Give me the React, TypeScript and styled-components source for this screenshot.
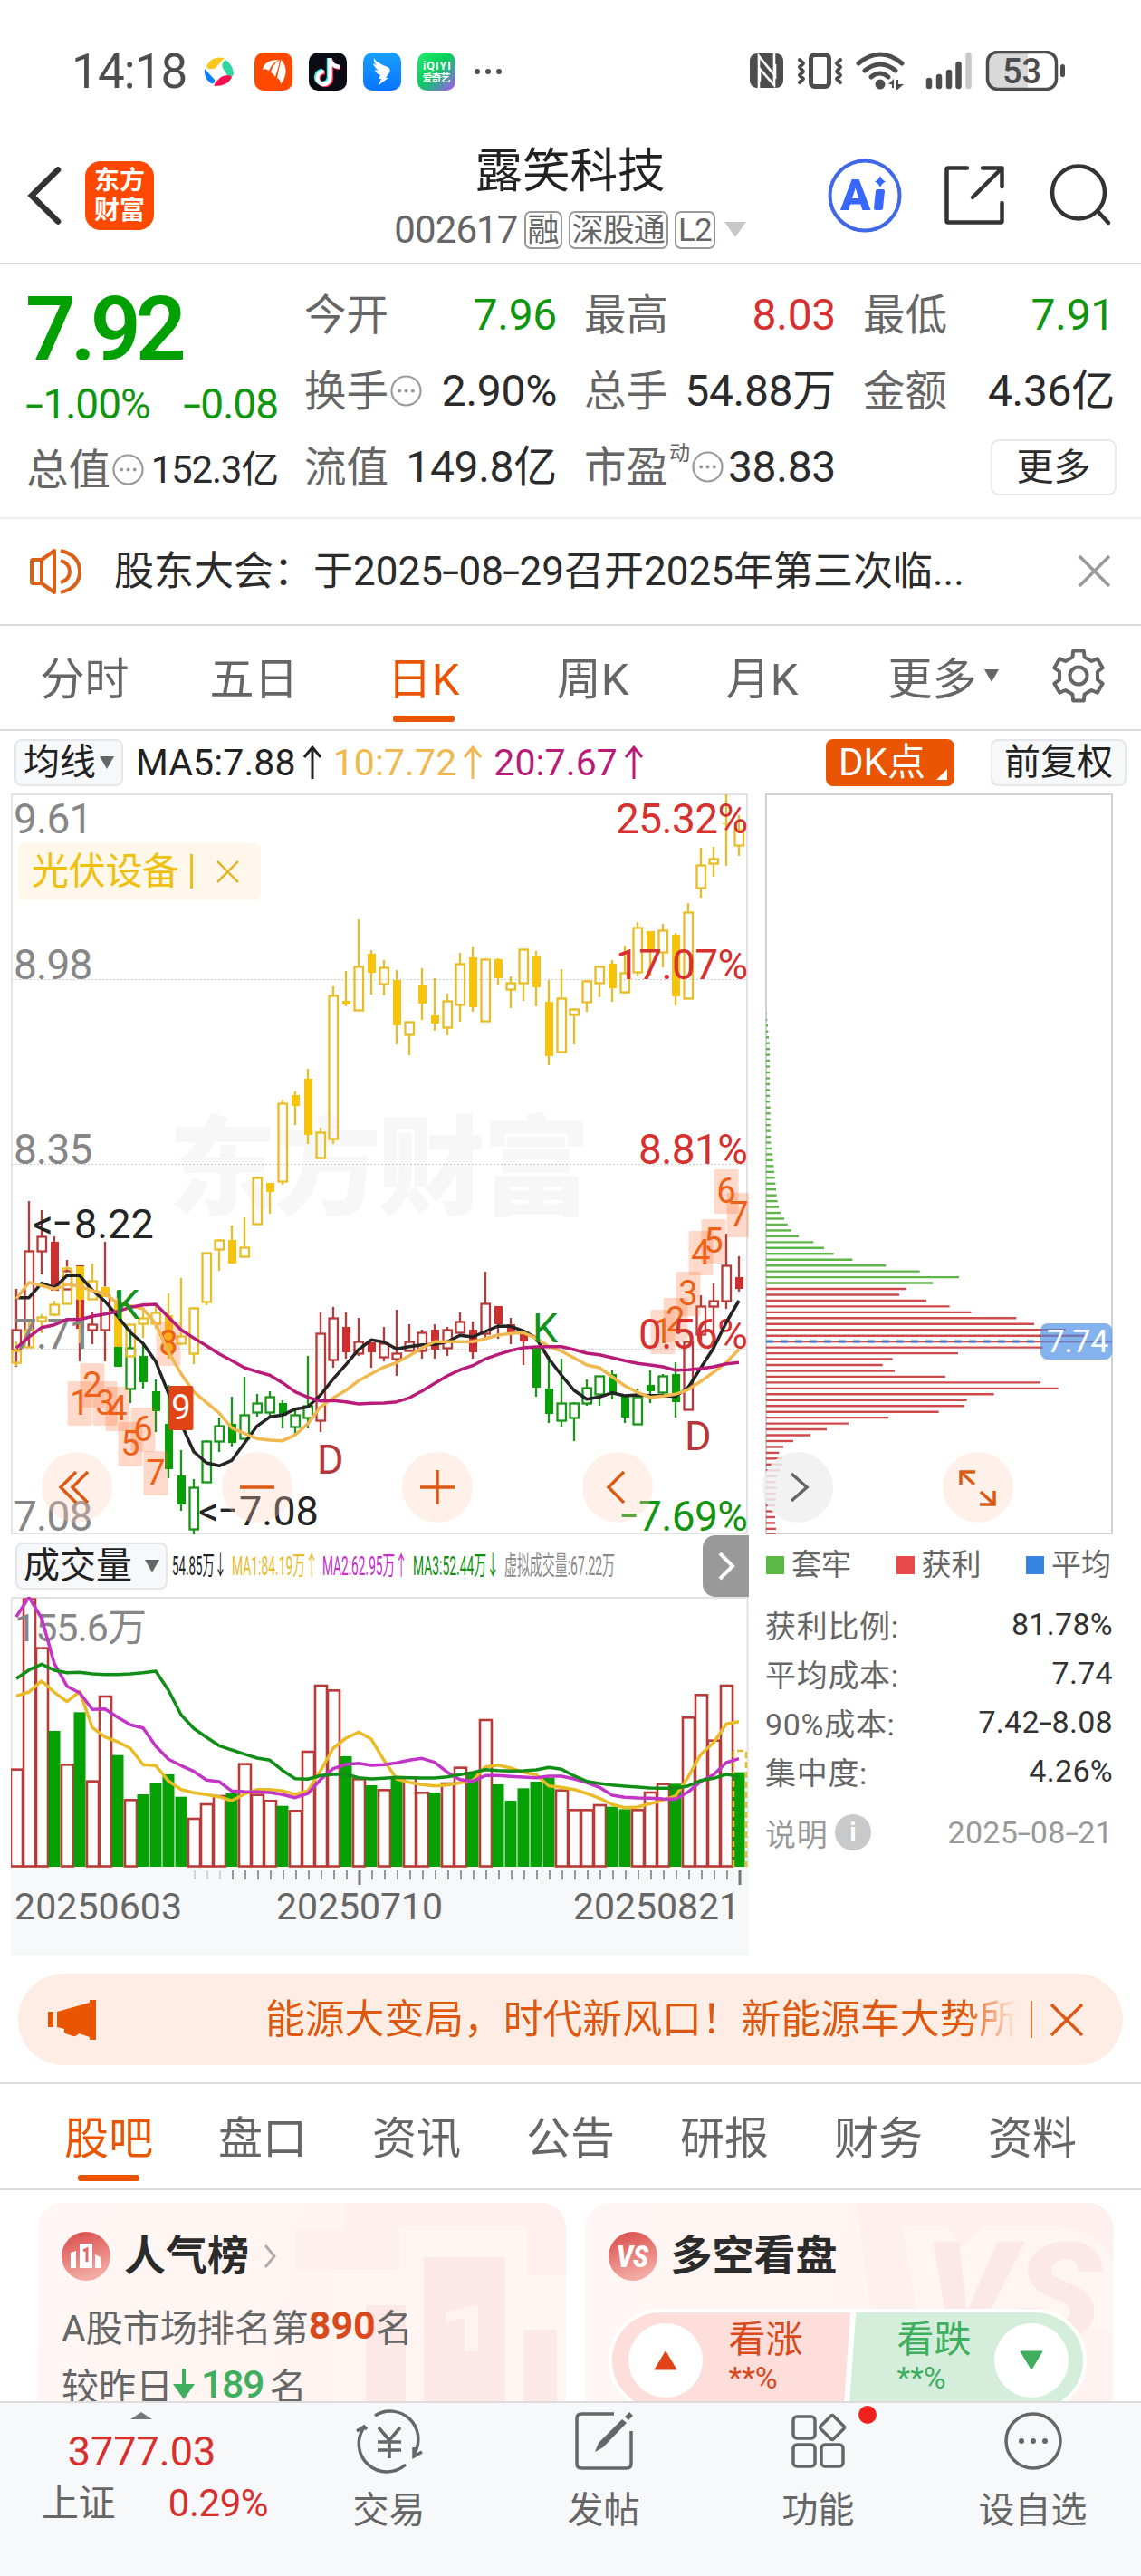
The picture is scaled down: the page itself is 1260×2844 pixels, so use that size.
import * as React from 'react'
import styled, { createGlobalStyle, css } from 'styled-components'

const FONT = `Roboto, 'Noto Sans CJK SC', sans-serif`

const color = {
  text: '#2b2b2b',
  sub: '#666',
  mute: '#999',
  line: '#dcdcdc',
  up: '#d6302f',
  down: '#0f960f',
  brand: '#ea5504',
  panel: '#f7f8fa',
}

const GlobalStyle = createGlobalStyle`
  * { box-sizing: border-box; }
  body {
    margin: 0;
    background: #fff;
    font-family: ${FONT};
    color: ${color.text};
    -webkit-font-smoothing: antialiased;
  }
  svg { display: block; flex: none; }
`

const Page = styled.div`
  display: flex;
  flex-direction: column;
  width: 1260px;
  height: 2844px;
  overflow: hidden;
  background: #fff;
  white-space: nowrap;
`

// Roboto's hyphen is short beside its digits
const Dash = styled.span`
  display: inline-block;
  width: 0.4em;
  text-align: center;
  letter-spacing: 0;
  transform: scaleX(1.55);
`

const dashed = (text: string) => text.split('-').map((part, i) => (
  <React.Fragment key={i}>{i > 0 && <Dash>-</Dash>}{part}</React.Fragment>
))

/* ---------- status bar ---------- */

const StatusBar = styled.div`
  display: flex;
  align-items: center;
  height: 142px;
  padding: 16px 84px 0 79px;
`

const Clock = styled.div`
  width: 145px;
  font-size: 53px;
  line-height: 60px;
  letter-spacing: -0.900px;
  color: #4d4d4d;
`

const AppIcons = styled.div`
  display: flex;
  align-items: center;
  gap: 18px;
  flex: 1;
`

const SystemIcons = styled.div`
  display: flex;
  align-items: center;
`

const StatusApps = () => (
  <AppIcons>
    <svg width="36" height="42" viewBox="0 0 36 42">
      <path d="M4 16C7 7 14 4 24 6L14 17Q8 20 4 16Z" fill="#fac81e" />
      <path d="M25 8Q33 13 34 23Q32 30 27 25L22 17Q20 12 25 8Z" fill="#30d5a0" />
      <path d="M32 27Q28 37 13 37Q11 35 20 27Q28 23 32 27Z" fill="#f8104e" />
      <path d="M2 18L13 30Q14 35 9 34Q1 29 2 18Z" fill="#0a80ff" />
    </svg>
    <svg width="42" height="42" viewBox="0 0 42 42" style={{ marginLeft: 3 }}>
      <rect width="42" height="42" rx="10" fill="#ff4800" />
      <path d="M9 19Q11 8 27 8Q19 12 16 20Q12 17 9 19ZM18 22Q20 13 28 8Q27 15 23 27Q21 23 18 22ZM25 28Q27 17 29.500 8Q40 20 29 35Q29 30 25 28Z" fill="#fff" />
    </svg>
    <svg width="42" height="42" viewBox="0 0 42 42">
      <rect width="42" height="42" rx="10" fill="#0b0b14" />
      <g fill="none" strokeWidth="4.4">
        <path d="M22 6V27A7 7 0 1 1 15 20M22 8Q24 15 32 16" stroke="#25f4ee" />
        <path d="M25 8V29A7 7 0 1 1 18 22M25 10Q27 17 35 17" stroke="#fe2c55" />
        <path d="M23.5 6V28A7 7 0 1 1 16.500 21M23.500 8Q25 15 34 16" stroke="#fff" />
      </g>
    </svg>
    <svg width="42" height="42" viewBox="0 0 42 42">
      <defs>
        <linearGradient id="ding" x1="0" y1="0" x2="0" y2="1">
          <stop offset="0" stopColor="#18a0ff" />
          <stop offset="1" stopColor="#0874ff" />
        </linearGradient>
      </defs>
      <rect width="42" height="42" rx="10" fill="url(#ding)" />
      <path d="M12 6Q14 11 27 16Q31 18 29 22L25 28H28L17 36L20 29H17L19 25Q14 23 13 19L17 20Q12 16 11 12L15 14Q11 10 12 6Z" fill="#fff" />
    </svg>
    <svg width="42" height="42" viewBox="0 0 42 42">
      <defs>
        <linearGradient id="qiyi" x1="0" y1="0" x2="1" y2="1">
          <stop offset="0.1" stopColor="#20e46a" />
          <stop offset="0.45" stopColor="#08cf5c" />
          <stop offset="0.68" stopColor="#3fa09a" />
          <stop offset="1" stopColor="#b74cff" />
        </linearGradient>
      </defs>
      <rect width="42" height="42" rx="10" fill="url(#qiyi)" />
      <g fill="#fff" fontFamily={FONT} fontWeight="700">
        <text x="6" y="19" fontSize="12.500" textLength="31">iQIYI</text>
        <text x="5.500" y="32" fontSize="11" textLength="31">爱奇艺</text>
      </g>
    </svg>
    <svg width="36" height="42" viewBox="0 0 36 42" fill="#4d4d4d">
      <circle cx="6" cy="21" r="3" />
      <circle cx="18" cy="21" r="3" />
      <circle cx="30" cy="21" r="3" />
    </svg>
  </AppIcons>
)

const StatusSystem = () => (
  <SystemIcons>
    <svg width="348" height="46" viewBox="828 56 348 46">
      <rect x="828" y="59" width="37" height="38" rx="8" fill="#4d4d4d" />
      <path d="M838 97V62L856 84V71M855 59V94L839 76V90" fill="none" stroke="#fff" strokeWidth="2.600" />
      <g fill="none" stroke="#4d4d4d" strokeLinecap="round" strokeLinejoin="round">
        <rect x="895.500" y="60.500" width="20" height="35" rx="4" strokeWidth="5" />
        <path d="M883 66L887 70L883 74L887 79L883 83L887 87L883 91M928 66L924 70L928 74L924 79L928 83L924 87L928 91" strokeWidth="4" />
        <path d="M948 70Q972 50 996 70M955 78Q972 64 989 78M962 85Q972 77 981 85" strokeWidth="5" />
      </g>
      <circle cx="972" cy="93" r="5.500" fill="#4d4d4d" />
      <path d="M981 93L987 87V97H985V93ZM990 88H992V93H998L991 99H990Z" fill="#4d4d4d" />
      <g stroke="#4d4d4d" strokeWidth="6.500" strokeLinecap="round">
        <path d="M1026 89V95M1037 85V95M1048 80V95M1058.500 71V95" />
        <path d="M1069.500 61V95" stroke="#c8c8c8" />
      </g>
      <path d="M1100 58H1135V98H1100Q1091 98 1091 89V67Q1091 58 1100 58Z" fill="#d9d9d9" />
      <rect x="1090.500" y="57.500" width="76" height="41" rx="11" fill="none" stroke="#4d4d4d" strokeWidth="3.500" />
      <rect x="1171" y="71" width="5" height="14" rx="2.500" fill="#4d4d4d" />
      <text x="1128.500" y="91.500" fontSize="38" fontWeight="500" fontFamily={FONT} textAnchor="middle" fill="#4d4d4d">53</text>
    </svg>
  </SystemIcons>
)

/* ---------- title bar ---------- */

const TitleBar = styled.header`
  display: flex;
  justify-content: space-between;
  height: 150px;
  padding: 0 29px 0 28px;
  border-bottom: 2px solid ${color.line};
`

const TitleSide = styled.div<{ $gap: number }>`
  display: flex;
  align-items: center;
  gap: ${p => p.$gap}px;
  width: 320px;
`

const Logo = styled.div`
  display: flex;
  flex-direction: column;
  align-items: center;
  justify-content: center;
  width: 76px;
  height: 76px;
  border-radius: 17px;
  background: #ff4800;
  color: #fff;
  font-size: 28px;
  font-weight: 700;
  line-height: 33px;
`

const TitleCenter = styled.div`
  display: flex;
  flex-direction: column;
  align-items: center;
`

const StockName = styled.h1`
  margin: 12px 0 0;
  font-size: 52.500px;
  font-weight: 400;
  line-height: 70px;
  color: #222;
`

const StockCode = styled.div`
  display: flex;
  align-items: center;
  height: 52px;
  margin-top: 4px;
  gap: 7px;
  font-size: 42px;
  color: ${color.sub};
  letter-spacing: -0.900px;
`

const Badge = styled.span`
  height: 42px;
  padding: 0 2px;
  border: 2px solid #999;
  border-radius: 7px;
  font-size: 35px;
  line-height: 39px;
`

const Caret = styled.i<{ $w: number; $h: number; $color?: string; $ml?: number }>`
  display: inline-block;
  margin-left: ${p => p.$ml || 0}px;
  border: solid transparent;
  border-width: ${p => p.$h}px ${p => p.$w / 2}px 0;
  border-top-color: ${p => p.$color || color.sub};
`

/* ---------- quote ---------- */

const Quote = styled.section`
  display: flex;
  height: 281px;
  padding: 14px 28px 0 29px;
  border-bottom: 2px solid #ececec;
`

const PriceColumn = styled.div`
  width: 278px;
  margin-right: 29px;
`

const Price = styled.div`
  height: 110px;
  margin-left: -1px;
  font-size: 98px;
  font-weight: 600;
  line-height: 116px;
  letter-spacing: -6px;
  color: #00a000;
`

const Change = styled.div`
  display: flex;
  justify-content: space-between;
  margin-bottom: 18px;
  font-size: 46px;
  line-height: 60px;
  letter-spacing: -1px;
  color: ${color.down};
`

const QuoteGrid = styled.div`
  display: grid;
  flex: none;
  grid-template-columns: 279px 278px 278px;
  grid-auto-rows: 84px;
  column-gap: 30px;
`

const Cell = styled.div<{ $tone?: string; $small?: boolean }>`
  display: flex;
  align-items: center;
  justify-content: space-between;
  line-height: 60px;
  font-size: 46.500px;

  ${p => p.$small && css`height: 50px;`}

  em {
    display: flex;
    align-items: center;
    gap: 2px;
    font-style: normal;
    color: ${color.sub};
  }
  b {
    font-weight: 400;
    font-size: ${p => (p.$small ? 42 : 48)}px;
    letter-spacing: ${p => (p.$small ? -1.200 : -0.300)}px;
    color: ${p => p.$tone || color.text};
  }
  sup {
    align-self: flex-start;
    margin: 3px 0 0 -1px;
    font-size: 23px;
    line-height: 24px;
  }
`

const MoreButton = styled.button`
  justify-self: end;
  align-self: center;
  width: 139px;
  height: 62px;
  margin-right: -2px;
  padding: 0;
  border: 2px solid #e8e8e8;
  border-radius: 9px;
  background: #fff;
  font-family: inherit;
  font-size: 41px;
  line-height: 54px;
  color: ${color.text};
`

const Dots = ({ size = 35, stroke = '#999', width = 2.2 }: { size?: number; stroke?: string; width?: number }) => (
  <svg width={size} height={size} viewBox="0 0 36 36" fill={stroke}>
    <circle cx="18" cy="18" r="16.500" fill="none" stroke={stroke} strokeWidth={width} />
    <circle cx="10.500" cy="18" r="2" />
    <circle cx="18" cy="18" r="2" />
    <circle cx="25.500" cy="18" r="2" />
  </svg>
)

/* ---------- notice ---------- */

const Notice = styled.section`
  display: flex;
  align-items: center;
  height: 118px;
  padding: 0 33px;
  border-bottom: 2px solid ${color.line};
`

const NoticeText = styled.p`
  flex: 1;
  margin: 0 0 0 34px;
  font-size: 44px;
  line-height: 60px;
`

const Cross = ({ size, stroke, width }: { size: number; stroke: string; width: number }) => (
  <svg width={size} height={size} viewBox={`0 0 ${size} ${size}`}>
    <path d={`M2 2L${size - 2} ${size - 2}M${size - 2} 2L2 ${size - 2}`} stroke={stroke} strokeWidth={width} />
  </svg>
)

/* ---------- tabs ---------- */

const Tabs = styled.nav<{ $pad: number }>`
  display: flex;
  align-items: center;
  height: 117px;
  padding: 0 ${p => p.$pad}px;
  border-bottom: 2px solid ${color.line};
`

const Tab = styled.div<{ $w: number; $active?: boolean }>`
  display: flex;
  position: relative;
  align-items: center;
  justify-content: center;
  width: ${p => p.$w}px;
  height: 100%;
  padding-bottom: 4px;
  font-size: 49px;
  color: ${color.sub};

  ${p => p.$active && css`
    color: ${color.brand};
    &::after {
      position: absolute;
      left: calc(50% - 34px);
      bottom: 8px;
      width: 68px;
      height: 7px;
      border-radius: 3px;
      background: ${color.brand};
      content: '';
    }
  `}
`

/* ---------- indicator row ---------- */

const IndicatorRow = styled.div`
  display: flex;
  align-items: center;
  height: 69px;
  padding: 0 16px;
`

const Chip = styled.div<{ $w: number; $brand?: boolean }>`
  display: flex;
  position: relative;
  align-items: center;
  justify-content: ${p => (p.$brand ? 'flex-start' : 'center')};
  width: ${p => p.$w}px;
  height: 52px;
  padding-left: ${p => (p.$brand ? 12 : 0)}px;
  border: 2px solid ${p => (p.$brand ? color.brand : '#e4e6ea')};
  border-radius: 8px;
  background: ${p => (p.$brand ? color.brand : color.panel)};
  color: ${p => (p.$brand ? '#fff' : '#222')};
  font-size: ${p => (p.$brand ? 42 : 40)}px;
  line-height: 48px;
`

const Corner = styled.i`
  position: absolute;
  right: 6px;
  bottom: 5px;
  border: 6px solid transparent;
  border-right-color: #fff;
  border-bottom-color: #fff;
`

const Averages = styled.div`
  display: flex;
  flex: 1;
  margin-left: 14px;
  gap: 12px;
  font-size: 41px;
  line-height: 52px;
`

const Average = styled.span<{ $color: string }>`
  display: flex;
  align-items: center;
  gap: 7px;
  letter-spacing: 0.100px;
  color: ${p => p.$color};
`

const UpArrow = ({ stroke }: { stroke: string }) => (
  <svg width="22" height="40" viewBox="0 0 22 40">
    <path d="M11 38V4M2 14L11 3L20 14" fill="none" stroke={stroke} strokeWidth="3" />
  </svg>
)

/* ---------- chart data ---------- */

// [high, body top, body bottom, low, filled]
type Candle = [number, number, number, number, 0 | 1]

const sector: Candle[] = [
  [1481, 1491, 1504, 1508, 0], [1457, 1468, 1487, 1487, 0], [1451, 1454, 1458, 1472, 0], [1436, 1440, 1451, 1453, 0],
  [1398, 1400, 1439, 1440, 0], [1398, 1398, 1435, 1483, 1], [1395, 1414, 1434, 1434, 0], [1420, 1421, 1432, 1432, 1],
  [1433, 1437, 1487, 1487, 1], [1462, 1462, 1497, 1497, 0], [1447, 1455, 1461, 1477, 0], [1442, 1449, 1461, 1467, 0],
  [1428, 1452, 1496, 1500, 1], [1411, 1475, 1483, 1483, 0], [1443, 1444, 1494, 1506, 0], [1383, 1383, 1437, 1441, 0],
  [1368, 1369, 1379, 1403, 0], [1353, 1369, 1395, 1395, 1], [1344, 1377, 1387, 1387, 0], [1299, 1300, 1351, 1351, 0],
  [1306, 1306, 1316, 1340, 1], [1214, 1218, 1304, 1308, 0], [1205, 1209, 1221, 1242, 1], [1180, 1191, 1253, 1263, 1],
  [1245, 1250, 1278, 1279, 0], [1089, 1099, 1257, 1263, 0], [1072, 1105, 1109, 1111, 1], [1015, 1067, 1115, 1115, 0],
  [1049, 1053, 1074, 1098, 1], [1060, 1068, 1086, 1099, 0], [1071, 1082, 1132, 1153, 1], [1128, 1128, 1142, 1165, 0],
  [1069, 1088, 1108, 1126, 1], [1080, 1121, 1130, 1138, 1], [1097, 1105, 1134, 1143, 0], [1052, 1064, 1109, 1128, 0],
  [1045, 1057, 1112, 1117, 1], [1058, 1059, 1127, 1127, 0], [1058, 1059, 1080, 1088, 1], [1078, 1085, 1092, 1113, 0],
  [1048, 1048, 1085, 1105, 0], [1050, 1056, 1090, 1111, 1], [1082, 1106, 1166, 1176, 1], [1070, 1102, 1161, 1161, 0],
  [1113, 1114, 1120, 1153, 0], [1082, 1083, 1106, 1117, 0], [1066, 1067, 1085, 1101, 0], [1060, 1064, 1091, 1106, 1],
  [1044, 1074, 1095, 1097, 0], [1018, 1024, 1073, 1078, 0], [1028, 1028, 1050, 1077, 1], [1020, 1027, 1051, 1068, 0],
  [1030, 1032, 1100, 1110, 1], [997, 1007, 1102, 1102, 0], [936, 955, 980, 991, 0], [935, 948, 953, 968, 0],
  [877, 909, 910, 956, 1], [900, 916, 933, 945, 0],
]

const stock: Candle[] = [
  [1423, 1468, 1490, 1509, 0], [1326, 1381, 1468, 1487, 0], [1336, 1365, 1381, 1407, 0], [1365, 1371, 1425, 1425, 1],
  [1391, 1403, 1423, 1424, 0], [1397, 1397, 1467, 1503, 1], [1448, 1462, 1468, 1484, 0], [1371, 1430, 1468, 1503, 0],
  [1425, 1442, 1509, 1509, 1], [1467, 1488, 1533, 1549, 0], [1483, 1497, 1526, 1533, 1], [1523, 1536, 1558, 1581, 1],
  [1529, 1572, 1622, 1632, 1], [1601, 1629, 1661, 1668, 1], [1633, 1642, 1688, 1694, 0], [1590, 1591, 1636, 1636, 0],
  [1565, 1574, 1591, 1603, 0], [1542, 1572, 1593, 1597, 1], [1520, 1562, 1588, 1588, 0], [1539, 1549, 1559, 1564, 0],
  [1536, 1542, 1559, 1563, 0], [1546, 1549, 1563, 1577, 1], [1557, 1562, 1575, 1583, 0], [1497, 1552, 1565, 1577, 0],
  [1449, 1472, 1568, 1581, 0], [1443, 1455, 1501, 1510, 0], [1449, 1465, 1493, 1500, 1], [1455, 1481, 1494, 1497, 0],
  [1482, 1482, 1493, 1510, 1], [1465, 1483, 1498, 1503, 0], [1446, 1494, 1500, 1519, 0], [1462, 1481, 1491, 1491, 0],
  [1468, 1471, 1491, 1500, 0], [1462, 1468, 1490, 1500, 1], [1465, 1468, 1488, 1497, 0], [1449, 1459, 1471, 1472, 0],
  [1459, 1468, 1493, 1500, 1], [1404, 1439, 1472, 1477, 0], [1442, 1442, 1462, 1478, 1], [1455, 1462, 1472, 1484, 1],
  [1468, 1473, 1481, 1507, 1], [1488, 1488, 1532, 1542, 1], [1497, 1533, 1561, 1571, 1], [1500, 1549, 1568, 1575, 0],
  [1548, 1549, 1565, 1591, 0], [1523, 1532, 1549, 1552, 0], [1519, 1519, 1539, 1552, 0], [1513, 1517, 1537, 1545, 1],
  [1542, 1542, 1565, 1571, 1], [1533, 1542, 1572, 1572, 0], [1513, 1529, 1536, 1549, 1], [1517, 1519, 1537, 1540, 0],
  [1504, 1517, 1548, 1565, 1], [1480, 1481, 1556, 1556, 0], [1430, 1442, 1473, 1480, 0], [1417, 1436, 1442, 1471, 0],
  [1362, 1397, 1436, 1445, 0], [1387, 1410, 1423, 1426, 1],
]

// the stock trades below the K/D signal in these two spans
const isDown = (i: number) => (i >= 8 && i <= 23) || (i >= 41 && i <= 52)

const ma5 = [488, 488, 440, 455, 415, 415, 463, 500, 550, 603, 640, 700, 805, 905, 998, 1035, 1045, 1027, 970, 913, 883, 877, 857, 850, 810, 757, 710, 660, 628, 635, 658, 650, 644, 643, 634, 613, 618, 600, 582, 583, 598, 622, 690, 745, 795, 824, 817, 803, 813, 810, 812, 812, 815, 785, 720, 655, 570, 498]
const ma10 = [492, 438, 448, 460, 443, 450, 465, 475, 507, 515, 525, 575, 668, 740, 800, 835, 870, 920, 938, 955, 960, 962, 943, 905, 850, 820, 795, 763, 740, 718, 703, 680, 655, 634, 634, 634, 634, 624, 612, 607, 604, 622, 650, 665, 688, 711, 720, 750, 780, 802, 818, 814, 808, 792, 765, 735, 703, 660]
const ma20 = [655, 618, 587, 578, 560, 560, 550, 542, 533, 520, 512, 510, 552, 595, 622, 647, 674, 697, 720, 733, 745, 770, 800, 818, 830, 829, 833, 840, 838, 837, 833, 820, 797, 772, 747, 727, 713, 691, 676, 663, 654, 651, 650, 650, 660, 672, 677, 687, 697, 706, 711, 717, 728, 727, 723, 717, 707, 703]

const volume = [788, 224, 386, 663, 772, 601, 827, 546, 743, 889, 873, 834, 807, 881, 951, 903, 876, 870, 770, 872, 892, 911, 925, 729, 510, 526, 747, 820, 843, 856, 815, 814, 865, 867, 834, 782, 798, 624, 840, 894, 853, 831, 818, 857, 922, 922, 906, 914, 922, 922, 864, 836, 838, 616, 541, 692, 510, 800]
const volumeDown = [3, 5, 8, 10, 11, 12, 13, 17, 21, 26, 28, 30, 33, 36, 38, 39, 40, 41, 42, 47, 48, 52, 57]
const vma1 = [547, 534, 497, 535, 566, 533, 652, 683, 699, 721, 775, 778, 829, 857, 868, 874, 881, 894, 872, 857, 857, 862, 873, 862, 795, 720, 687, 667, 690, 760, 822, 833, 841, 845, 842, 835, 827, 782, 776, 786, 800, 808, 845, 850, 857, 870, 886, 907, 917, 915, 904, 893, 878, 815, 740, 702, 640, 632]
const vma2 = [285, 220, 290, 440, 515, 537, 592, 590, 618, 643, 653, 713, 757, 778, 797, 826, 831, 862, 864, 865, 867, 874, 884, 870, 824, 788, 774, 770, 777, 775, 769, 760, 754, 767, 800, 824, 830, 811, 811, 814, 816, 818, 813, 813, 822, 834, 850, 876, 883, 885, 886, 888, 889, 865, 830, 808, 768, 755]
const vma3 = [490, 461, 442, 462, 470, 469, 474, 476, 476, 474, 470, 465, 528, 610, 655, 684, 712, 726, 740, 753, 760, 794, 821, 823, 811, 807, 806, 818, 822, 820, 817, 818, 819, 819, 815, 808, 801, 791, 794, 796, 795, 792, 784, 790, 812, 830, 837, 842, 846, 849, 852, 853, 853, 845, 827, 820, 807, 813]

const trapped = [2, 4, 6, 7, 9, 11, 12, 12, 12, 12, 12, 12, 12, 12, 12, 12, 14, 14, 14, 14, 14, 15, 16, 19, 21, 23, 25, 27, 29, 31, 33, 35, 38, 42, 48, 60, 71, 83, 108, 157, 192, 224, 286, 397, 509, 639, 552]
const profit = [464, 441, 531, 608, 680, 829, 888, 992, 1062, 1146, 917, 636, 419, 386, 426, 594, 909, 968, 755, 665, 656, 572, 405, 273, 201, 147, 90, 57, 43, 54, 54, 45, 37, 32, 34, 33, 32, 30, 27, 30, 30, 33, 33]

// [digit, x, y]
const countDown: [number, number, number][] = [
  [1, 74.5, 1525], [2, 88.5, 1505], [3, 102.5, 1525], [4, 116.5, 1531], [5, 130.5, 1570], [6, 144.5, 1554],
  [7, 158.5, 1602], [8, 172.5, 1459],
  [1, 718.5, 1446], [2, 732.5, 1433], [3, 746.5, 1404], [4, 760.5, 1359], [5, 774.5, 1346], [6, 788.5, 1291],
  [7, 802.5, 1317],
]

const slotX = (i: number) => 18 + i * 14
const priceY = (v: number) => 1270 + v / 3
const volumeY = (v: number) => 1690 + v / 3
const toPoints = (data: number[], y: (v: number) => number) => data.map((v, i) => `${slotX(i)},${y(v).toFixed(1)}`).join(' ')

const CandleMark = ({ i, data, stroke, fill }: { i: number; data: Candle; stroke: string; fill: string }) => {
  const [high, top, bottom, low, filled] = data
  const x = slotX(i)
  return (
    <g stroke={stroke} strokeWidth="2.300">
      {high < top && <path d={`M${x} ${high}V${top}`} />}
      {low > bottom && <path d={`M${x} ${bottom}V${low}`} />}
      {filled
        ? <rect x={x - 4} y={top} width="9" height={Math.max(bottom - top, 1)} fill={fill} stroke="none" />
        : <rect x={x - 4.5} y={top + 0.5} width="9.500" height={bottom - top} fill="none" />}
    </g>
  )
}

/* ---------- chart ---------- */

const ChartArea = styled.section`
  display: flex;
  height: 1291px;
  padding-left: 12px;
`

const ChartColumn = styled.div`
  position: relative;
  width: 815px;
`

const SectorTag = styled.div`
  display: flex;
  position: absolute;
  left: 8px;
  top: 55px;
  align-items: center;
  width: 268px;
  height: 62px;
  padding-left: 15px;
  border-radius: 7px;
  background: #fff8ea;
  color: #f0c00f;
  font-size: 41px;
  line-height: 58px;
  letter-spacing: -0.300px;

  i {
    width: 3px;
    height: 38px;
    margin: 0 25px 0 12px;
    background: #edc01c;
  }
`

const Controls = styled.div<{ $left: number }>`
  display: flex;
  position: absolute;
  left: ${p => p.$left}px;
  top: 727px;
  gap: 121px;
`

const RoundButton = styled.button<{ $gray?: boolean }>`
  display: flex;
  align-items: center;
  justify-content: center;
  width: 78px;
  height: 78px;
  padding: 0;
  border: none;
  border-radius: 50%;
  background: ${p => (p.$gray ? 'rgba(240, 240, 240, 0.85)' : 'rgba(255, 208, 185, 0.3)')};
`

const glyphs = {
  rewind: 'M38 22L21 39L38 56M51 22L34 39L51 56',
  minus: 'M20 39H58',
  plus: 'M20 39H58M39 20V58',
  prev: 'M46 22L29 39L46 56',
  next: 'M32 24L49 39L32 54',
  expand: 'M20 36V22H36M21 23L35 36M42 44L57 58M41 58H57V43',
}

const Glyph = ({ name, stroke = '#dd5a14' }: { name: keyof typeof glyphs; stroke?: string }) => (
  <svg width="78" height="78" viewBox="0 0 78 78">
    <path d={glyphs[name]} fill="none" stroke={stroke} strokeWidth="3.500" />
  </svg>
)

const ChartDash = () => <tspan fontSize="68" fontWeight="300" dy="5">-</tspan>

const PriceChart = () => (
  <svg width="815" height="818" viewBox="12 876 815 818" fontFamily={FONT}>
    <text x="186" y="1332" fontSize="119" fontWeight="900" fill="#f7f7f7" textLength="466">东方财富</text>
    <path d="M13 1081.500H825M13 1285.500H825M13 1489.500H825" stroke="#ccc" strokeWidth="1" strokeDasharray="2 2" />
    <path d="M13 877V1693" stroke="#ddd" strokeWidth="1.500" />
    <path d="M12 877H825V1693H12" fill="none" stroke="#e2e2e2" strokeWidth="2" />
    {stock.map((c, i) => (
      <CandleMark key={i} i={i} data={c} stroke={isDown(i) ? '#1a941a' : '#b83a38'} fill={isDown(i) ? '#06a006' : '#cc2f30'} />
    ))}
    {sector.map((c, i) => <CandleMark key={i} i={i} data={c} stroke="#e8be28" fill="#f6c40c" />)}
    {countDown.map(([n, x, y], i) => (
      <g key={i}>
        <rect x={x} y={y} width="27" height="49" rx="2" fill="#ff6a2a" fillOpacity="0.25" />
        <text x={x + 13.500} y={y + 37} fontSize="38" fill="#ee6016" textAnchor="middle">{n}</text>
      </g>
    ))}
    <g fontSize="46" fill="#868686" letterSpacing="-0.800">
      <text x="15" y="920">9.61</text>
      <text x="15" y="1081">8.98</text>
      <text x="15" y="1285">8.35</text>
      <text x="15" y="1489">7.71</text>
      <text x="15" y="1690">7.08</text>
    </g>
    <g fontSize="46" fill="#d6302f" letterSpacing="-0.600">
      <text x="680" y="920">25.32%</text>
      <text x="680" y="1081">17.07%</text>
      <text x="705" y="1285">8.81%</text>
      <text x="705" y="1489">0.56%</text>
      <text x="685" y="1690" fill="#12940f"><ChartDash /><tspan x="705" dy="-5">7.69%</tspan></text>
    </g>
    <g fill="none" strokeWidth="3.500" strokeLinejoin="round">
      <polyline points={toPoints(ma5, priceY)} stroke="#242424" />
      <polyline points={toPoints(ma10, priceY)} stroke="#f0b84e" />
      <polyline points={toPoints(ma20, priceY)} stroke="#b91c78" />
    </g>
    <rect x="186.500" y="1530" width="27" height="49" rx="2" fill="#e04416" />
    <text x="200" y="1567" fontSize="38" fill="#fff" textAnchor="middle">9</text>
    <g fontSize="45">
      <text x="126" y="1456" fill="#13921c">K</text>
      <text x="588" y="1482" fill="#13921c">K</text>
      <text x="350" y="1627" fill="#b5373a">D</text>
      <text x="756" y="1601" fill="#b5373a">D</text>
      <text x="36" y="1367" fill="#242424">&lt;<ChartDash /><tspan x="82" dy="-5">8.22</tspan></text>
      <text x="219" y="1684" fill="#242424">&lt;<ChartDash /><tspan x="264" dy="-5">7.08</tspan></text>
    </g>
  </svg>
)

const VolumeHead = styled.div`
  display: flex;
  align-items: center;
  height: 69px;
  padding-left: 5px;
`

const NextPane = styled.button`
  display: flex;
  align-items: center;
  justify-content: center;
  width: 51px;
  height: 68px;
  margin-left: auto;
  padding: 0;
  border: none;
  border-radius: 14px 0 0 14px;
  background: #999;
`

const volumeTexts: [string, number, number, string][] = [
  ['54.85万↓', 0, 60, '#222'],
  ['MA1:84.19万↑', 66, 95, '#e8bb2c'],
  ['MA2:62.95万↑', 166, 94, '#c52fc8'],
  ['MA3:52.44万↓', 266, 95, '#0f8f14'],
  ['虚拟成交量:67.22万', 367, 122, '#888'],
]

const VolumeTexts = () => (
  <svg width="492" height="44" viewBox="0 0 492 44" fontFamily={FONT} fontSize="29">
    {volumeTexts.map(([t, x, w, fill]) => (
      <text key={t} x={x} y="32" fill={fill} textLength={w} lengthAdjust="spacingAndGlyphs">{t}</text>
    ))}
  </svg>
)

const VolumeChart = () => (
  <svg width="815" height="397" viewBox="12 1763 815 397" fontFamily={FONT}>
    <rect x="12" y="2064" width="815" height="95" fill={color.panel} />
    <path d="M12 1764H825.500V2062M12.500 1764V2062" fill="none" stroke="#e2e2e2" strokeWidth="2" />
    {volume.map((v, i) => {
      const x = slotX(i)
      const top = volumeY(v)
      return volumeDown.includes(i)
        ? <rect key={i} x={x - 6.5} y={top} width="13" height={2061 - top} fill="#04a004" />
        : <rect key={i} x={x - 6} y={top + 1} width="13" height={2059.5 - top} fill="#fff" stroke="#b93a38" strokeWidth="2.600" />
    })}
    <path d="M810 2061V1933H824V2061" fill="none" stroke="#e6bd2e" strokeWidth="2.500" strokeDasharray="7 4" />
    <text x="16" y="1812" fontSize="43" fill="#868686" letterSpacing="-1">155.6万</text>
    <g fill="none" strokeWidth="3.500" strokeLinejoin="round">
      <polyline points={toPoints(vma1, volumeY)} stroke="#e9bc27" />
      <polyline points={toPoints(vma2, volumeY)} stroke="#c335c6" />
      <polyline points={toPoints(vma3, volumeY)} stroke="#118e17" />
    </g>
    {volume.map((_, i) => i > 13 && (
      <path
        key={i}
        d={`M${slotX(i) + 1} 2065V${i % 30 === 27 ? 2081 : 2075}`}
        stroke={i < 17 ? '#c8c8c8' : '#777'}
        strokeWidth={i % 30 === 27 ? 3 : 1.500}
      />
    ))}
    <g fontSize="41" fill="#666">
      <text x="16" y="2119" textLength="185">20250603</text>
      <text x="305" y="2119" textLength="184">20250710</text>
      <text x="633" y="2119" textLength="184">20250821</text>
    </g>
  </svg>
)

/* ---------- cost distribution ---------- */

const CostColumn = styled.div`
  position: relative;
  width: 384px;
  margin-left: 18px;
`

const Legend = styled.div`
  display: flex;
  justify-content: space-between;
  padding: 12px 2px 0 1px;
  font-size: 33px;
  line-height: 44px;
  color: ${color.sub};
`

const LegendItem = styled.span<{ $color: string }>`
  display: flex;
  align-items: center;
  gap: 8px;

  &::before {
    width: 20px;
    height: 20px;
    background: ${p => p.$color};
    content: '';
  }
`

const CostRows = styled.dl`
  margin: 16px 0 0;
`

const CostRow = styled.div<{ $last?: boolean }>`
  display: flex;
  align-items: center;
  justify-content: space-between;
  height: 54px;
  margin-top: ${p => (p.$last ? 14 : 0)}px;
  font-size: 34px;
  color: ${p => (p.$last ? color.mute : '#333')};

  dt {
    display: flex;
    align-items: center;
    gap: 8px;
    letter-spacing: 0.700px;
    color: ${p => (p.$last ? color.mute : color.sub)};
  }
  dd {
    margin: 0;
    letter-spacing: 0.300px;
  }
`

const Info = styled.i`
  width: 40px;
  height: 40px;
  border-radius: 50%;
  background: #c9c9c9;
  color: #fff;
  font: 700 28px/40px ${FONT};
  text-align: center;
`

const CostChart = () => (
  <svg width="384" height="818" viewBox="845 876 384 818" fontFamily={FONT}>
    <rect x="846" y="877" width="382" height="816" fill="none" stroke="#ccc" strokeWidth="1.800" />
    {[...trapped, ...profit].map((v, i) => (
      <path key={i} d={`M846 ${1119.4 + i * 6.46}h${v / 3}`} stroke={i < trapped.length ? '#5eb548' : '#cf4a4b'} strokeWidth="2.400" />
    ))}
    <path d="M846 1481H1149" stroke="#3a80dc" strokeWidth="3" strokeDasharray="8 8" />
    <rect x="1149" y="1461" width="79" height="40" rx="8" fill="#4a8de4" fillOpacity="0.68" />
    <text x="1190" y="1493" fontSize="35" fill="#fff" textAnchor="middle">7.74</text>
  </svg>
)

/* ---------- banner ---------- */

const Banner = styled.section`
  display: flex;
  align-items: center;
  height: 101px;
  margin: 13px 20px 19px;
  padding: 0 43px 0 33px;
  border-radius: 51px;
  background: #fdede4;
  color: #e0580f;
`

const BannerText = styled.p`
  width: 831px;
  margin: 0 15px 0 187px;
  overflow: hidden;
  font-size: 43.800px;
  line-height: 60px;
  mask-image: linear-gradient(90deg, #000 93%, transparent 100%);
`

const BannerRule = styled.i`
  width: 2px;
  height: 41px;
  margin-right: 19px;
  background: #e0783f;
`

/* ---------- cards ---------- */

const Cards = styled.section`
  display: flex;
  height: 233px;
  padding: 14px 31px 0 41px;
  gap: 21px;
  overflow: hidden;
`

const Card = styled.div`
  position: relative;
  width: 584px;
  height: 300px;
  padding: 25px 27px;
  overflow: hidden;
  border-radius: 28px;
  background: linear-gradient(100deg, #fff7f5, #fff2f0);
`

const CardArt = styled.svg`
  position: absolute;
  left: 0;
  top: 0;
`

const CardTitle = styled.h2`
  display: flex;
  position: relative;
  align-items: center;
  height: 68px;
  margin: 0;
  font-size: 46px;
  font-weight: 700;
  line-height: 62px;
  gap: 15px;

  span { margin-top: -3px; }
`

const CardLine = styled.div`
  display: flex;
  position: relative;
  align-items: center;
  height: 65px;
  font-size: 41px;
  color: ${color.sub};
`

const Rank = styled.b<{ $color: string }>`
  font-size: 43px;
  color: ${p => p.$color};
`

const Vote = styled.div`
  display: flex;
  position: relative;
  width: 528px;
  height: 114px;
  margin: 24px 0 0 0;
  border: 4px solid #fff;
  border-radius: 57px;
  background: linear-gradient(94deg, #fddedb 0 262px, #fff 263px 268px, #d5eedb 269px);
`

const VoteSide = styled.div<{ $tone: string; $right?: boolean }>`
  display: flex;
  flex-direction: ${p => (p.$right ? 'row-reverse' : 'row')};
  align-items: center;
  width: 50%;
  padding: 0 16px 0 18px;
  gap: ${p => (p.$right ? 25 : 29)}px;
  color: ${p => p.$tone};
  font-size: 41px;
  line-height: 46px;

  p { margin: -8px 0 0; }
  small {
    display: block;
    font-size: 34px;
    line-height: 38px;
  }
`

const VoteKnob = styled.div`
  display: flex;
  align-items: center;
  justify-content: center;
  width: 82px;
  height: 82px;
  border-radius: 50%;
  background: #fff;
`

/* ---------- bottom bar ---------- */

const BottomBar = styled.footer`
  display: flex;
  height: 193px;
  border-top: 2px solid ${color.line};
  background: ${color.panel};
`

const IndexBox = styled.div`
  display: flex;
  flex-direction: column;
  align-items: center;
  width: 311px;
  padding: 10px 0 0 0;
  font-size: 45px;
  line-height: 56px;
  color: ${color.up};

  span { margin: 8px 0 0 2px; }
  p {
    display: flex;
    justify-content: space-between;
    width: 250px;
    margin: 1px 0 0 31px;
    font-size: 42px;
    letter-spacing: -0.500px;
  }
  em {
    font-style: normal;
    font-size: 41px;
    color: ${color.sub};
  }
`

const NavItem = styled.div`
  display: flex;
  position: relative;
  flex-direction: column;
  align-items: center;
  width: 237px;
  padding-top: 6px;
  font-size: 40px;
  line-height: 56px;
  color: ${color.sub};

  svg { margin-bottom: 13px; }
`

const RedDot = styled.i`
  position: absolute;
  left: 163px;
  top: 3px;
  width: 20px;
  height: 20px;
  border-radius: 50%;
  background: #f0201f;
`

const periods = ['分时', '五日', '日K', '周K', '月K']
const sections = ['股吧', '盘口', '资讯', '公告', '研报', '财务', '资料']

const Gear = () => {
  const points: string[] = []
  for (let k = 0; k < 6; k++) {
    const at = (deg: number, r: number) => {
      const a = ((k * 60 + deg - 90) * Math.PI) / 180
      points.push(`${(32 + r * Math.cos(a)).toFixed(1)},${(32 + r * Math.sin(a)).toFixed(1)}`)
    }
    at(-12, 28)
    at(12, 28)
    at(18, 21.5)
    at(42, 21.5)
  }
  return (
    <svg width="64" height="64" viewBox="0 0 64 64" fill="none" stroke="#666" strokeWidth="4" strokeLinejoin="round">
      <polygon points={points.join(' ')} />
      <circle cx="32" cy="32" r="9.500" />
    </svg>
  )
}

export default function App() {
  return (
    <Page>
      <GlobalStyle />
      <StatusBar>
        <Clock>14:18</Clock>
        <StatusApps />
        <StatusSystem />
      </StatusBar>

      <TitleBar>
        <TitleSide $gap={24}>
          <svg width="42" height="70" viewBox="0 0 42 70">
            <path d="M36 6.500L7 35L36 63.500" fill="none" stroke="#333" strokeWidth="6.500" strokeLinecap="round" />
          </svg>
          <Logo><span>东方</span><span>财富</span></Logo>
        </TitleSide>
        <TitleCenter>
          <StockName>露笑科技</StockName>
          <StockCode>
            002617
            <Badge>融</Badge>
            <Badge>深股通</Badge>
            <Badge>L2</Badge>
            <Caret $w={25} $h={17} $color="#c8c8c8" $ml={3} />
          </StockCode>
        </TitleCenter>
        <TitleSide $gap={0}>
          <svg width="320" height="90" viewBox="911 170 320 90" fill="none" stroke="#333" strokeWidth="4.500" strokeLinecap="round" strokeLinejoin="round">
            <circle cx="955" cy="215" r="38.500" stroke="#4068e6" strokeWidth="4" />
            <text x="928" y="231" fontSize="49" fontWeight="900" fontFamily={FONT} fill="#3a67fb" stroke="none">A</text>
            <path d="M969 210H975L973 229H967Z" fill="#3a67fb" stroke="#3a67fb" strokeWidth="4" />
            <path d="M972 193Q974 198 978 199.500Q974 201 972 206Q970 201 966 199.500Q970 198 972 193Z" fill="#3a67fb" stroke="none" />
            <path d="M1068 184.500H1047Q1045.500 184.500 1045.500 186V243Q1045.500 244.500 1047 244.500H1105Q1106.500 244.500 1106.500 243V223M1085 184.500H1106.500V205M1105 186L1074 217" />
            <circle cx="1191" cy="211.500" r="29" />
            <path d="M1212 232L1224 245" />
          </svg>
        </TitleSide>
      </TitleBar>

      <Quote>
        <PriceColumn>
          <Price>7.92</Price>
          <Change><span>{dashed('-1.00%')}</span><span>{dashed('-0.08')}</span></Change>
          <Cell $small><em>总值<Dots /></em><b>152.3亿</b></Cell>
        </PriceColumn>
        <QuoteGrid>
          <Cell $tone={color.down}><em>今开</em><b>7.96</b></Cell>
          <Cell $tone={color.up}><em>最高</em><b>8.03</b></Cell>
          <Cell $tone={color.down}><em>最低</em><b>7.91</b></Cell>
          <Cell><em>换手<Dots /></em><b>2.90%</b></Cell>
          <Cell><em>总手</em><b>54.88万</b></Cell>
          <Cell><em>金额</em><b>4.36亿</b></Cell>
          <Cell><em>流值</em><b>149.8亿</b></Cell>
          <Cell><em>市盈<sup>动</sup><Dots /></em><b>38.83</b></Cell>
          <MoreButton>更多</MoreButton>
        </QuoteGrid>
      </Quote>

      <Notice>
        <svg width="59" height="52" viewBox="0 0 59 52" fill="none" stroke="#dd5f17" strokeWidth="4" strokeLinejoin="round">
          <path d="M3 13H13L27 3V49L13 39H3Q2 39 2 37V15Q2 13 3 13ZM13 13V39" />
          <path d="M34 3Q55 8 55 26Q55 44 34 49M34 14Q44 17 44 26Q44 35 34 38" />
        </svg>
        <NoticeText>股东大会：于{dashed('2025-08-29')}召开2025年第三次临...</NoticeText>
        <Cross size={37} stroke="#999" width={3.5} />
      </Notice>

      <Tabs $pad={0}>
        {periods.map(t => <Tab key={t} $w={187} $active={t === '日K'}>{t}</Tab>)}
        <Tab $w={213}>更多<Caret $w={17} $h={14} $ml={8} /></Tab>
        <Tab $w={86}><Gear /></Tab>
      </Tabs>

      <IndicatorRow>
        <Chip $w={120}>均线<Caret $w={17} $h={14} $ml={4} /></Chip>
        <Averages>
          <Average $color="#222">MA5:7.88<UpArrow stroke="#222" /></Average>
          <Average $color="#f0b84e">10:7.72<UpArrow stroke="#f0b84e" /></Average>
          <Average $color="#b91c78">20:7.67<UpArrow stroke="#b91c78" /></Average>
        </Averages>
        <Chip $w={142} $brand><span>DK点</span><Corner /></Chip>
        <Chip $w={150} style={{ marginLeft: 40 }}>前复权</Chip>
      </IndicatorRow>

      <ChartArea>
        <ChartColumn>
          <PriceChart />
          <SectorTag>光伏设备<i /><Cross size={27} stroke="#dfb52a" width={2.500} /></SectorTag>
          <Controls $left={34}>
            <RoundButton><Glyph name="rewind" /></RoundButton>
            <RoundButton><Glyph name="minus" /></RoundButton>
            <RoundButton><Glyph name="plus" /></RoundButton>
            <RoundButton><Glyph name="prev" /></RoundButton>
          </Controls>
          <VolumeHead>
            <Chip $w={168} style={{ marginRight: 5 }}>成交量<Caret $w={17} $h={14} $ml={14} /></Chip>
            <VolumeTexts />
            <NextPane>
              <svg width="24" height="34" viewBox="0 0 24 34">
                <path d="M5 3L19 17L5 31" fill="none" stroke="#fff" strokeWidth="4" />
              </svg>
            </NextPane>
          </VolumeHead>
          <VolumeChart />
        </ChartColumn>

        <CostColumn>
          <CostChart />
          <Controls $left={-3}>
            <RoundButton $gray><Glyph name="next" stroke="#666" /></RoundButton>
            <RoundButton><Glyph name="expand" /></RoundButton>
          </Controls>
          <Legend>
            <LegendItem $color="#5ab944">套牢</LegendItem>
            <LegendItem $color="#e64a4a">获利</LegendItem>
            <LegendItem $color="#3683e2">平均</LegendItem>
          </Legend>
          <CostRows>
            <CostRow><dt>获利比例:</dt><dd>81.78%</dd></CostRow>
            <CostRow><dt>平均成本:</dt><dd>7.74</dd></CostRow>
            <CostRow><dt>90%成本:</dt><dd>{dashed('7.42-8.08')}</dd></CostRow>
            <CostRow><dt>集中度:</dt><dd>4.26%</dd></CostRow>
            <CostRow $last><dt>说明<Info>i</Info></dt><dd>{dashed('2025-08-21')}</dd></CostRow>
          </CostRows>
        </CostColumn>
      </ChartArea>

      <Banner>
        <svg width="53" height="44" viewBox="0 0 53 44" fill={color.brand}>
          <rect y="13" width="6" height="17" />
          <path d="M10 13L46 3V0H53V44H46V41L34 37Q31 42 25 39L19 37Q17 35 18 32L10 30Z" />
        </svg>
        <BannerText>能源大变局，时代新风口！新能源车大势所趋</BannerText>
        <BannerRule />
        <Cross size={38} stroke="#dd5a14" width={3.500} />
      </Banner>

      <Tabs $pad={35} style={{ borderTop: `2px solid ${color.line}`, height: 119 }}>
        {sections.map((t, i) => <Tab key={t} $w={170} $active={i === 0}>{t}</Tab>)}
      </Tabs>

      <Cards>
        <Card>
          <CardArt width="584" height="300" viewBox="0 0 584 300">
            <path d="M340 0H584V300H325V74H285V30H340Z" fill="#fef0ee" />
            <path d="M400 26H540V80H584V300H325V74H400Z" fill="#fff5f3" />
            <path d="M427 60H516V300H427ZM363 113H407V300H363ZM538 140H574V300H538Z" fill="#fce8e6" />
            <path d="M487 112V164H472V127L451 133V121Z" fill="#fff3f1" />
          </CardArt>
          <CardTitle>
            <svg width="54" height="54" viewBox="0 0 54 54">
              <defs>
                <linearGradient id="badge" x1="0" y1="0" x2="0.300" y2="1">
                  <stop offset="0" stopColor="#d94a47" />
                  <stop offset="1" stopColor="#f3aaa3" />
                </linearGradient>
              </defs>
              <circle cx="27" cy="27" r="27" fill="url(#badge)" />
              <path d="M10 23L16 21V40H10ZM20 13H34V40H20ZM37 25L43 28V40H37Z" fill="#fff" />
              <path d="M24 21L28 19V33" fill="none" stroke="#dd6a65" strokeWidth="3" />
            </svg>
            <span>人气榜</span>
            <svg width="16" height="28" viewBox="0 0 16 28">
              <path d="M3 2L13 14L3 26" fill="none" stroke="#b5aaa8" strokeWidth="3" />
            </svg>
          </CardTitle>
          <CardLine style={{ marginTop: 9 }}>A股市场排名第<Rank $color="#d84a1b">890</Rank>名</CardLine>
          <CardLine>
            较昨日
            <svg width="24" height="34" viewBox="0 0 24 34" fill="#3fae5f">
              <path d="M10 0H14V17H24L12 34L0 17H10Z" />
            </svg>
            <Rank $color="#3fae5f" style={{ margin: '0 7px', fontWeight: 500, letterSpacing: -1.5 }}>189</Rank>
            名
          </CardLine>
        </Card>
        <Card style={{ paddingLeft: 26 }}>
          <CardArt width="584" height="300" viewBox="0 0 584 300" fontFamily={FONT}>
            <path d="M300 0H584V140H318Z" fill="#fef0ee" />
            <path d="M350 26H400L415 50L440 26H520Q584 32 584 80V140H370Z" fill="#fff5f3" />
            <text x="374" y="150" fontSize="150" fontWeight="900" fontStyle="italic" fill="#fce8e6" textLength="196" lengthAdjust="spacingAndGlyphs">VS</text>
          </CardArt>
          <CardTitle>
            <svg width="54" height="54" viewBox="0 0 54 54">
              <circle cx="27" cy="27" r="27" fill="url(#badge)" />
              <text x="9" y="38.500" fontSize="33" fontWeight="900" fontStyle="italic" fontFamily={FONT} fill="#fff" textLength="35" lengthAdjust="spacingAndGlyphs">VS</text>
            </svg>
            <span>多空看盘</span>
          </CardTitle>
          <Vote>
            <VoteSide $tone="#d84a1b">
              <VoteKnob>
                <svg width="26" height="22" viewBox="0 0 26 22"><path d="M13 1L25 21H1Z" fill="#e04416" stroke="#e04416" strokeLinejoin="round" /></svg>
              </VoteKnob>
              <p>看涨<small>**%</small></p>
            </VoteSide>
            <VoteSide $tone="#3fae5f" $right>
              <VoteKnob>
                <svg width="26" height="22" viewBox="0 0 26 22"><path d="M1 1H25L13 21Z" fill="#3fae5f" stroke="#3fae5f" strokeLinejoin="round" /></svg>
              </VoteKnob>
              <p>看跌<small>**%</small></p>
            </VoteSide>
          </Vote>
        </Card>
      </Cards>

      <BottomBar>
        <IndexBox>
          <svg width="24" height="8" viewBox="0 0 24 8"><path d="M12 0L24 8H0Z" fill="#777" /></svg>
          <span>3777.03</span>
          <p><em>上证</em>0.29%</p>
        </IndexBox>
        <NavItem>
          <svg width="76" height="72" viewBox="0 0 76 72" fill="none" stroke="#666" strokeWidth="3.500">
            <path d="M22 8A31 31 0 0 1 66 49M56 62A31 31 0 0 1 10 21M2 25L10 20L13 23M65 43V53L74 48" />
            <path d="M26 21L38 35L50 21M38 35V55M25 37H51M25 46H51" />
          </svg>
          交易
        </NavItem>
        <NavItem>
          <svg width="76" height="72" viewBox="0 0 76 72" fill="none" stroke="#666" strokeWidth="3.500">
            <path d="M49 6H13Q8 6 8 11V61Q8 66 13 66H63Q68 66 68 61V25" />
            <path d="M28 48L32 38L58 12L63 16L37 43ZM61 9L66 4L70 8L65 13Z" fill="#666" stroke="none" />
          </svg>
          发帖
        </NavItem>
        <NavItem>
          <RedDot />
          <svg width="76" height="72" viewBox="0 0 76 72" fill="none" stroke="#666" strokeWidth="3.500">
            <rect x="10" y="9" width="24" height="24" rx="4" />
            <rect x="10" y="40" width="24" height="24" rx="4" />
            <rect x="41" y="40" width="24" height="24" rx="4" />
            <rect x="43" y="11" width="20" height="20" rx="2" transform="rotate(45 53 21)" />
          </svg>
          功能
        </NavItem>
        <NavItem>
          <svg width="76" height="72" viewBox="0 0 76 72" fill="#666">
            <circle cx="38" cy="36" r="30" fill="none" stroke="#666" strokeWidth="3.500" />
            <circle cx="25" cy="36" r="3" />
            <circle cx="38" cy="36" r="3" />
            <circle cx="51" cy="36" r="3" />
          </svg>
          设自选
        </NavItem>
      </BottomBar>
    </Page>
  )
}
